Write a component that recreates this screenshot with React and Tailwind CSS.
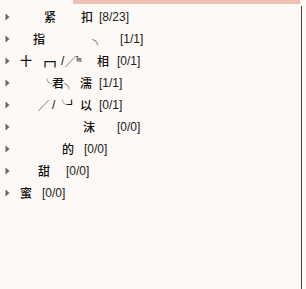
import React from 'react';

const cjk = '"Noto Sans CJK SC", "Noto Sans", sans-serif';

const Arrow = () => (
  <svg width="5" height="8" viewBox="0 0 5 8" className="ml-[5px] shrink-0">
    <path d="M0.5 0.5 L4.5 4 L0.5 7.5 Z" fill="#666" />
  </svg>
);

const Count = ({ children, className = '' }) => (
  <span className={`text-[12px] text-[#222] ${className}`} style={{ fontFamily: '"Liberation Sans", Arial, sans-serif' }}>
    {children}
  </span>
);

const Han = ({ children, className = '' }) => (
  <span className={`inline-block w-[12px] text-[12px] leading-[14px] font-medium text-[#111] ${className}`}>{children}</span>
);

const Row = ({ children }) => (
  <div className="flex items-center h-[22px] whitespace-nowrap">
    <Arrow />
    {children}
  </div>
);

export default function App() {
  return (
    <div className="flex w-[306px] h-[289px] bg-[#fdf9f6] overflow-hidden" style={{ fontFamily: cjk }}>
      <div className="flex-1 flex flex-col">
        <div className="ml-[73px] w-[227px] h-[4px] bg-[#ecc1b4]" />
        <div className="pt-[2px] flex flex-col">
          <Row>
            <Han className="ml-[34px]">紧</Han>
            <Han className="ml-[25px]">扣</Han>
            <Count className="ml-[6px]">[8/23]</Count>
          </Row>
          <Row>
            <Han className="ml-[23px]">指</Han>
            <span className="inline-block w-[12px] ml-[47px] text-[11px] font-bold text-[#111]">╮</span>
            <Count className="ml-[16px]">[1/1]</Count>
          </Row>
          <Row>
            <Han className="ml-[10px]">十</Han>
            <span className="inline-block w-[20px] ml-[8px] text-[10px] font-bold text-[#111]">┏┓</span>
            <span className="inline-block w-[4px] ml-[1px] text-[12px] text-[#111]" style={{ fontFamily: '"Liberation Sans", sans-serif' }}>/</span>
            <span className="inline-block w-[11px] text-[11px] font-bold text-[#111]">╱</span>
            <span className="inline-block w-[7px] -mt-[6px] text-[6px] font-bold text-[#111]">℡</span>
            <Han className="ml-[14px]">相</Han>
            <Count className="ml-[8px]">[0/1]</Count>
          </Row>
          <Row>
            <span className="inline-block w-[10px] ml-[32px] text-[10px] font-bold text-[#111]">╰</span>
            <Han>君</Han>
            <span className="inline-block w-[10px] text-[10px] font-bold text-[#111]">╮</span>
            <Han className="ml-[6px]">濡</Han>
            <Count className="ml-[7px]">[1/1]</Count>
          </Row>
          <Row>
            <span className="inline-block w-[12px] ml-[28px] text-[11px] font-bold text-[#111]">╱</span>
            <span className="inline-block w-[6px] ml-[2px] text-[12px] text-[#111]" style={{ fontFamily: '"Liberation Sans", sans-serif' }}>/</span>
            <span className="inline-block w-[18px] text-[9px] font-bold text-[#111]">╰┛</span>
            <Han className="ml-[4px]">以</Han>
            <Count className="ml-[7px]">[0/1]</Count>
          </Row>
          <Row>
            <Han className="ml-[73px]">沫</Han>
            <Count className="ml-[22px]">[0/0]</Count>
          </Row>
          <Row>
            <Han className="ml-[52px]">的</Han>
            <Count className="ml-[10px]">[0/0]</Count>
          </Row>
          <Row>
            <Han className="ml-[28px]">甜</Han>
            <Count className="ml-[16px]">[0/0]</Count>
          </Row>
          <Row>
            <Han className="ml-[10px]">蜜</Han>
            <Count className="ml-[10px]">[0/0]</Count>
          </Row>
        </div>
      </div>
      <div className="w-[1px] mt-[6px] bg-[#4a463e]" />
      <div className="w-[4px]" />
    </div>
  );
}
